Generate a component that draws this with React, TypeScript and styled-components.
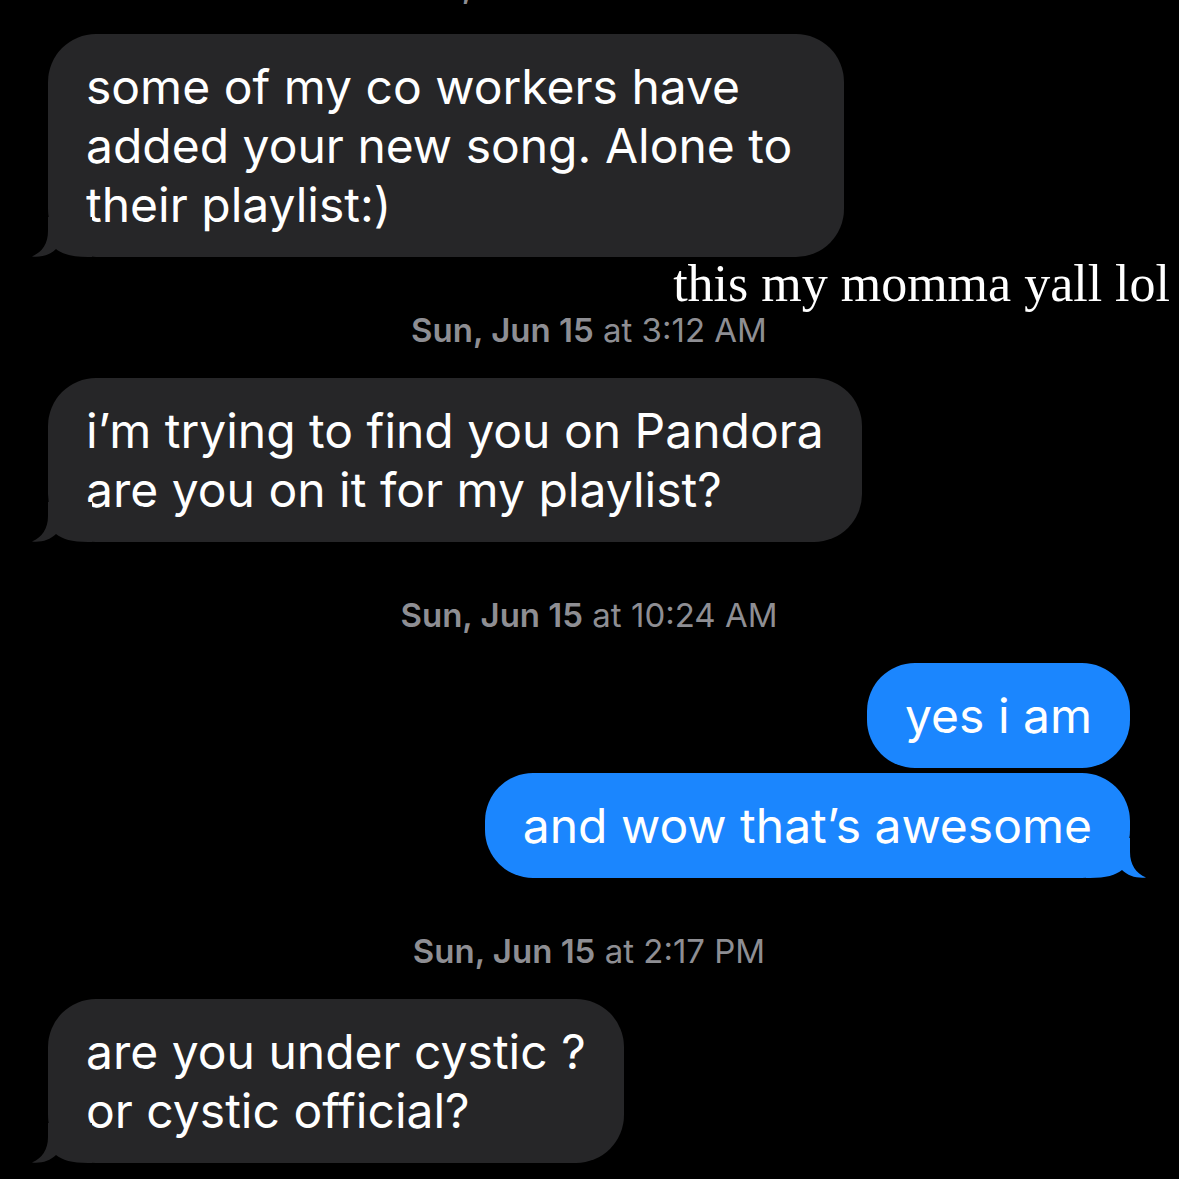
import styled, { createGlobalStyle } from "styled-components";

const GlobalStyle = createGlobalStyle`
  html, body {
    margin: 0;
    padding: 0;
    background: #000;
  }
  body {
    overflow: hidden;
  }
`;

// Styled Components
const Screen = styled.div`
  position: relative;
  width: 1179px;
  height: 1179px;
  overflow: hidden;
  background: #000;
  font-family: Inter, "Noto Sans", sans-serif;
`;

const Thread = styled.div`
  display: flex;
  flex-direction: column;
  padding: 0 49px 0 48px;
  margin-top: -32px;
`;

const Stamp = styled.div`
  text-align: center;
  font-size: 33px;
  line-height: 36px;
  color: #8e8e93;
  margin: 55px 0 30px;
  white-space: nowrap;

  &:first-child {
    margin-top: 0;
  }

  b {
    font-weight: 600;
  }
`;

const Bubble = styled.div<{ $me?: boolean }>`
  position: relative;
  align-self: ${(p) => (p.$me ? "flex-end" : "flex-start")};
  background: ${(p) => (p.$me ? "#1b86fe" : "#262628")};
  color: #fff;
  font-size: 48px;
  line-height: 59px;
  padding: 23px 38px;
  border-radius: 48px;
  white-space: pre;

  & + & {
    margin-top: 5px;
  }
`;

const Tail = styled.svg<{ $me?: boolean }>`
  position: absolute;
  bottom: 0;
  width: 60px;
  height: 40px;
  ${(p) =>
    p.$me
      ? "right: -16px; transform: scaleX(-1);"
      : "left: -16px;"}
`;

const Caption = styled.div`
  position: absolute;
  top: 258px;
  right: 9px;
  font-family: "Liberation Serif", "Times New Roman", serif;
  font-size: 52px;
  line-height: 52px;
  color: #fff;
  white-space: nowrap;
`;

type MsgProps = {
  me?: boolean;
  tail?: boolean;
  lines: string[];
};

function Message({ me, tail, lines }: MsgProps) {
  return (
    <Bubble $me={me}>
      {tail && (
        <Tail $me={me} viewBox="0 0 60 40">
          <path
            d="M16 0 L16 14 C16 27 10 35 0 39.5 C9 40.5 18 38 24 32 C30 37 40 40 56 40 L60 40 L60 0 Z"
            fill={me ? "#1b86fe" : "#262628"}
          />
        </Tail>
      )}
      {lines.map((l, i) => (
        <div key={i}>{l}</div>
      ))}
    </Bubble>
  );
}

function TimeStamp({ day, time }: { day: string; time: string }) {
  return (
    <Stamp>
      <b>{day}</b> at {time}
    </Stamp>
  );
}

export default function App() {
  return (
    <Screen>
      <GlobalStyle />
      <Thread>
        <TimeStamp day="Sun, Jun 15" time="12:44 AM" />
        <Message
          tail
          lines={[
            "some of my co workers have",
            "added your new song. Alone to ",
            "their playlist:)",
          ]}
        />
        <TimeStamp day="Sun, Jun 15" time="3:12 AM" />
        <Message
          tail
          lines={["i\u2019m trying to find you on Pandora", "are you on it for my playlist?"]}
        />
        <TimeStamp day="Sun, Jun 15" time="10:24 AM" />
        <Message me lines={["yes i am"]} />
        <Message me tail lines={["and wow that\u2019s awesome"]} />
        <TimeStamp day="Sun, Jun 15" time="2:17 PM" />
        <Message tail lines={["are you under cystic ?", "or cystic official?"]} />
      </Thread>
      <Caption>this my momma yall lol</Caption>
    </Screen>
  );
}
